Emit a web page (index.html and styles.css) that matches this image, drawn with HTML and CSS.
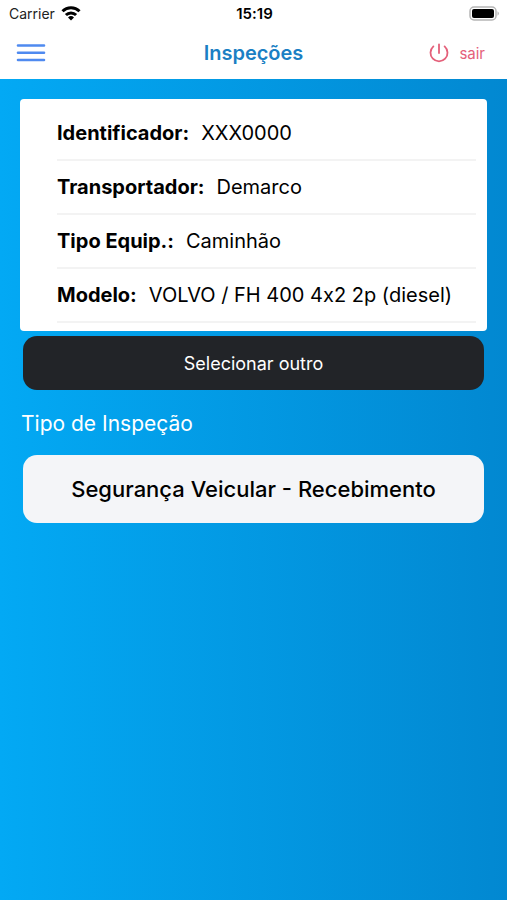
FILE: index.html
```
<!DOCTYPE html>
<html lang="pt-BR">
<head>
    <meta charset="UTF-8">
    <meta name="viewport" content="width=device-width, initial-scale=1.0">
    <title>Inspeções</title>
    <link rel="stylesheet" href="styles.css">
</head>
<body>
    <div class="status-bar">
        <div class="carrier">
            <span>Carrier</span>
            <svg width="20" height="16" viewBox="0 0 20 16" fill="none" stroke="#000" stroke-width="3" aria-hidden="true">
                <path d="M1.5 5.2a12 12 0 0 1 17 0"/>
                <path d="M4.9 9a7.2 7.2 0 0 1 10.2 0"/>
                <path d="M10 14.5l-3-3a4.3 4.3 0 0 1 6 0z" fill="#000" stroke="none"/>
            </svg>
        </div>
        <time class="clock">15:19</time>
        <svg class="battery" width="31" height="15" viewBox="0 0 31 15" aria-hidden="true">
            <rect x="1" y="1" width="26" height="13" rx="4" fill="#fff" stroke="#b5b5b5" stroke-width="1.5"/>
            <rect x="3" y="3" width="22" height="9" rx="2" fill="#000"/>
            <path d="M28.5 5.2a2.6 2.6 0 0 1 0 4.6z" fill="#b5b5b5"/>
        </svg>
    </div>

    <header class="toolbar">
        <button class="menu-button" type="button" aria-label="Menu">
            <svg width="30" height="20" viewBox="0 0 30 20" stroke="#4f8af0" stroke-width="2.6" stroke-linecap="round" aria-hidden="true">
                <path d="M2 2.5h26M2 9.7h26M2 17h26"/>
            </svg>
        </button>
        <h1>Inspeções</h1>
        <button class="logout-button" type="button">
            <svg width="20" height="20" viewBox="0 0 20 20" fill="none" stroke="#e4607a" stroke-width="1.8" stroke-linecap="round" aria-hidden="true">
                <path d="M10 1.5v8.5"/>
                <path d="M4.4 3.4a8.5 8.5 0 1 0 11.2 0"/>
            </svg>
            <span>sair</span>
        </button>
    </header>

    <main class="content">
        <dl class="card">
            <div class="item"><dt>Identificador:</dt><dd>XXX0000</dd></div>
            <div class="item"><dt>Transportador:</dt><dd>Demarco</dd></div>
            <div class="item"><dt>Tipo Equip.:</dt><dd>Caminhão</dd></div>
            <div class="item"><dt>Modelo:</dt><dd>VOLVO / FH 400 4x2 2p (diesel)</dd></div>
        </dl>
        <button class="button button-dark" type="button">Selecionar outro</button>

        <h2>Tipo de Inspeção</h2>
        <button class="button button-light" type="button">Segurança Veicular - Recebimento</button>
    </main>
</body>
</html>
```
FILE: styles.css
```
* {
    box-sizing: border-box;
}
body {
    margin: 0;
    min-height: 100vh;
    display: flex;
    flex-direction: column;
    font-family: Inter, 'Liberation Sans', sans-serif;
    font-feature-settings: 'calt' 0; /* keeps the plain x in 4x2 */
    color: #000;
    background-color: #fff;
}
button {
    font-family: inherit;
    border: none;
    cursor: pointer;
}
svg {
    display: block;
}
/* Status bar */
.status-bar {
    display: grid;
    grid-template-columns: 1fr auto 1fr;
    align-items: center;
    height: 27px;
    padding: 0 7px 0 9px;
    font-size: 14px;
}
.carrier {
    display: flex;
    align-items: center;
    gap: 6px;
    color: #222;
}
.clock {
    font-size: 15px;
    font-weight: 600;
}
.battery {
    justify-self: end;
}
/* Toolbar */
.toolbar {
    display: grid;
    grid-template-columns: 1fr auto 1fr;
    align-items: center;
    height: 52px;
    padding: 0 16px;
}
.menu-button {
    justify-self: start;
    padding: 0;
    background: none;
}
h1 {
    margin: 0;
    font-size: 20px;
    font-weight: 600;
    color: #1b7fc4;
}
.logout-button {
    justify-self: end;
    display: flex;
    align-items: center;
    gap: 10px;
    padding: 0 6px 0 0;
    background: none;
    font-size: 15px;
    color: #e4607a;
}
/* Content */
.content {
    flex: 1;
    padding: 20px;
    background: linear-gradient(90deg, #03a9f4, #0288d1);
}
.card {
    margin: 0 0 5px;
    padding: 8px 11px 8px 37px;
    background-color: #fff;
    border-radius: 4px;
}
.item {
    display: flex;
    align-items: center;
    gap: 12px;
    height: 54px;
    border-bottom: 2px solid #f3f3f3;
    font-size: 20px;
}
dt {
    font-weight: 700;
}
dd {
    margin: 0;
}
.button {
    display: block;
    width: calc(100% - 6px);
    margin: 0 3px;
    padding: 0 16px;
    border-radius: 14px;
}
.button-dark {
    height: 54px;
    font-size: 18px;
    color: #fff;
    background-color: #222428;
}
.button-light {
    height: 68px;
    font-size: 22px;
    font-weight: 500;
    color: #000;
    background-color: #f4f5f8;
}
h2 {
    margin: 20px 1px 18px;
    font-size: 21px;
    font-weight: 400;
    line-height: 27px;
    color: #fff;
}
```
